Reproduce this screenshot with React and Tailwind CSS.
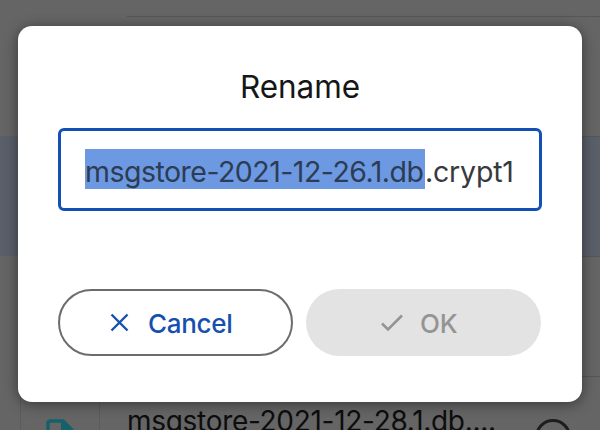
import React from "react";

// File row behind the dialog, only the parts outside of it are visible
const FileRow = ({ selected, name }) => (
    <div
        className={`flex h-[120px] shrink-0 ${selected ? "bg-[#5a5f69]" : "bg-[#656565]"}`}
    >
        <div className="w-[127px] shrink-0 pl-[20px] pt-[3px]">
            {name && (
                <div className="flex h-[112px] w-[80px] justify-center border border-[#5b5b5b] pt-[38px]">
                    <svg width="28" height="36" viewBox="0 0 28 36" fill="none">
                        <path
                            d="M4 3h13l9 9v18a4 4 0 0 1-4 4H4a2 2 0 0 1-2-2V5a2 2 0 0 1 2-2z"
                            stroke="#14606b"
                            strokeWidth="3.4"
                        />
                        <path d="M15 2v11h11z" fill="#14606b" />
                    </svg>
                </div>
            )}
        </div>
        <div className="flex flex-1 justify-between border-t border-[#565656]">
            {name && (
                <>
                    <span className="whitespace-nowrap pt-[24px] text-[28px] leading-[40px] tracking-[-0.3px] text-[#0d0d0d]">
                        {name}
                    </span>
                    <span className="mr-[29px] mt-[42px] h-[36px] w-[36px] shrink-0 rounded-full border-[3px] border-[#1d1d1d]" />
                </>
            )}
        </div>
    </div>
);

const RenameDialog = () => (
    <div className="absolute left-[18px] top-[26px] flex h-[376px] w-[564px] flex-col rounded-[14px] bg-white px-[40px] shadow-[0_2px_14px_rgba(0,0,0,0.45)]">
        <h1 className="mt-[41px] text-center text-[31.5px] leading-[40px] tracking-[-0.1px] text-[#161616]">
            Rename
        </h1>

        <div className="mt-[21px] flex h-[83px] items-center whitespace-nowrap rounded-[6px] border-[3px] border-[#134fb4] pb-px pl-[24px] text-[28.5px] leading-[46px] text-[#36393e]">
            <span className="h-[40px] w-[340px] bg-[#6c99e2] tracking-[-0.52px] text-[#2d3c54]">
                msgstore-2021-12-26.1.db
            </span>
            <span className="h-[40px] tracking-[-0.2px]">.crypt1</span>
        </div>

        <div className="mt-[78px] flex gap-[13px]">
            <button
                type="button"
                className="flex h-[67px] w-[235px] items-center rounded-full border-2 border-[#6c6c6c] pl-[50px] text-[26px] font-medium tracking-[-0.3px] text-[#1650ae]"
            >
                <svg width="20" height="20" viewBox="0 0 20 20" fill="none">
                    <path d="M1.5 1.5l16 16M17.5 1.5l-16 16" stroke="currentColor" strokeWidth="2.4" />
                </svg>
                <span className="ml-[18px] mt-[2px]">Cancel</span>
            </button>
            <button
                type="button"
                disabled
                className="flex h-[67px] w-[235px] items-center rounded-full bg-[#e3e3e3] pl-[74px] text-[26px] font-medium tracking-[-0.3px] text-[#949494]"
            >
                <svg width="24" height="20" viewBox="0 0 24 20" fill="none">
                    <path d="M2 10.5l6 6L22 2.5" stroke="currentColor" strokeWidth="2.6" />
                </svg>
                <span className="ml-[16px] mt-[2px]">OK</span>
            </button>
        </div>
    </div>
);

export default function App() {
    return (
        <div className="relative h-[430px] w-[600px] overflow-hidden bg-[#656565] font-['Inter','Roboto',sans-serif]">
            <div className="flex flex-col pt-[16px]">
                <FileRow />
                <FileRow selected />
                <FileRow />
                <FileRow name="msgstore-2021-12-28.1.db...." />
            </div>
            <RenameDialog />
        </div>
    );
}
